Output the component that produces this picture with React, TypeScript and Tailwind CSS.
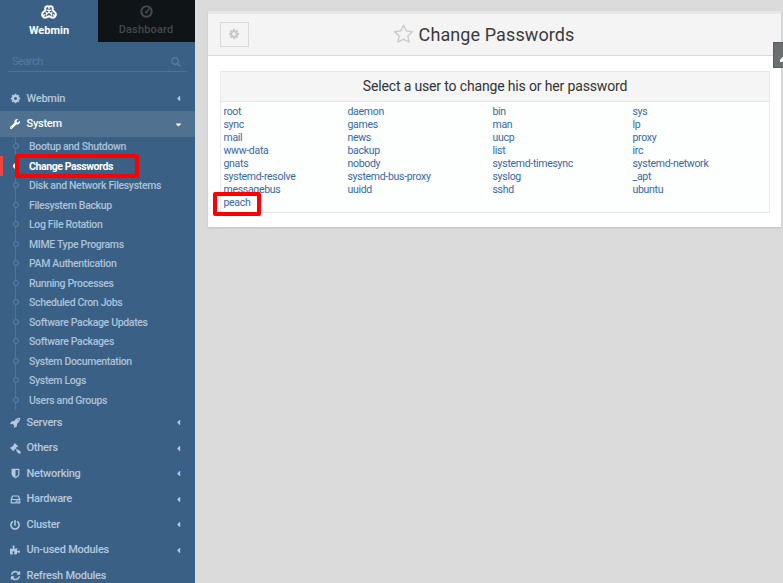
import type { ReactNode } from "react";
import { FaWrench, FaPowerOff, FaPuzzlePiece, FaSearch, FaCaretLeft, FaCaretDown } from "react-icons/fa";

const systemItems = [
  "Bootup and Shutdown", "Change Passwords", "Disk and Network Filesystems",
  "Filesystem Backup", "Log File Rotation", "MIME Type Programs",
  "PAM Authentication", "Running Processes", "Scheduled Cron Jobs",
  "Software Package Updates", "Software Packages", "System Documentation",
  "System Logs", "Users and Groups",
];

const users = [
  ["root", "daemon", "bin", "sys"],
  ["sync", "games", "man", "lp"],
  ["mail", "news", "uucp", "proxy"],
  ["www-data", "backup", "list", "irc"],
  ["gnats", "nobody", "systemd-timesync", "systemd-network"],
  ["systemd-resolve", "systemd-bus-proxy", "syslog", "_apt"],
  ["messagebus", "uuidd", "sshd", "ubuntu"],
  ["peach"],
];

const glyphs = {
  cog: "M1152 896q0-106-75-181t-181-75-181 75-75 181 75 181 181 75 181-75 75-181zm512-109v222q0 12-8 23t-20 13l-185 28q-19 54-39 91 35 50 107 138 10 12 10 25t-9 23q-27 37-99 108t-94 71q-12 0-26-9l-138-108q-44 23-91 38-16 136-29 186-7 28-36 28h-222q-14 0-24.5-8.5t-11.5-21.5l-28-184q-49-16-90-37l-141 107q-10 9-25 9-14 0-25-11-126-114-165-168-7-10-7-23 0-12 8-23 15-21 51-66.5t54-70.5q-27-50-41-99l-183-27q-13-2-21-12.5t-8-23.5v-222q0-12 8-23t19-13l186-28q14-46 39-92-40-57-107-138-10-12-10-24 0-10 9-23 26-36 98.5-107.5t94.5-71.5q13 0 26 10l138 107q44-23 91-38 16-136 29-186 7-28 36-28h222q14 0 24.5 8.5t11.5 21.5l28 184q49 16 90 37l142-107q9-9 24-9 13 0 25 10 129 119 165 170 7 8 7 22 0 12-8 23-15 21-51 66.5t-54 70.5q26 50 41 98l183 28q13 2 21 12.5t8 23.5z",
  rocket: "M1440 448q0-40-28-68t-68-28-68 28-28 68 28 68 68 28 68-28 28-68zm224-288q0 249-75.5 430.5t-253.5 360.5q-81 80-195 176l-20 379q-2 16-16 26l-384 224q-7 4-16 4-12 0-23-9l-64-64q-13-14-8-32l85-276-281-281-276 85q-3 1-9 1-14 0-23-9l-64-64q-17-19-5-39l224-384q10-14 26-16l379-20q96-114 176-195 188-187 358-258t431-71q14 0 24 9.5t10 22.5z",
  shield: "M1344 960v-640h-448v1137q119-63 213-137 235-184 235-360zm192-768v768q0 86-33.5 170.5t-83 150-118 127.5-126.5 103-121 77.5-89.5 49.5-42.5 20q-12 6-26 6t-26-6q-16-7-42.5-20t-89.5-49.5-121-77.5-126.5-103-118-127.5-83-150-33.5-170.5v-768q0-26 19-45t45-19h1152q26 0 45 19t19 45z",
  star: "M1201 1004l306-297-422-62-189-382-189 382-422 62 306 297-73 421 378-199 377 199zm527-357q0 22-26 48l-363 354 86 500q1 7 1 20 0 50-41 50-19 0-40-12l-449-236-449 236q-22 12-40 12-21 0-31.5-14.5t-10.5-35.5q0-6 2-20l86-500-364-354q-25-27-25-48 0-37 56-46l502-73 225-455q19-41 49-41t49 41l225 455 502 73q56 9 56 46z",
  gavel: "M1771 1536q0 53-37 90l-107 108q-39 37-91 37-53 0-90-37l-363-364q-38-36-38-90 0-53 43-96l-256-256-126 126q-14 14-34 14t-34-14q2 2 12.5 12t12.5 13 10 11.5 10 13.5 6 13.5 5.5 16.5 1.5 18q0 38-28 68-3 3-16.5 18t-19 20.5-18.5 16.5-22 15.5-22 9-26 4.5q-40 0-68-28l-408-408q-28-28-28-68 0-13 4.5-26t9-22 15.5-22 16.5-18.5 20.5-19 18-16.5q30-28 68-28 10 0 18 1.5t16.5 5.5 13.5 6 13.5 10 11.5 10 13 12.5 12 12.5q-14-14-14-34t14-34l348-348q14-14 34-14t34 14q-2-2-12.5-12t-12.5-13-10-11.5-10-13.5-6-13.5-5.5-16.5-1.5-18q0-38 28-68 3-3 16.5-18t19-20.5 18.5-16.5 22-15.5 22-9 26-4.5q40 0 68 28l408 408q28 28 28 68 0 13-4.5 26t-9 22-15.5 22-16.5 18.5-20.5 19-18 16.5q-30 28-68 28-10 0-18-1.5t-16.5-5.5-13.5-6-13.5-10-11.5-10-13-12.5-12-12.5q14 14 14 34t-14 34l-126 126 256 256q43-43 96-43 52 0 91 37l363 363q37 39 37 91z",
  refresh: "M1639 1056q0 5-1 7-64 268-268 434.5t-478 166.5q-146 0-282.5-55t-243.5-157l-129 129q-19 19-45 19t-45-19-19-45v-448q0-26 19-45t45-19h448q26 0 45 19t19 45-19 45l-137 137q71 66 161 102t187 36q134 0 250-65t186-179q11-17 53-117 8-23 30-23h192q13 0 22.5 9.5t9.5 22.5zm25-800v448q0 26-19 45t-45 19h-448q-26 0-45-19t-19-45 19-45l138-138q-148-137-349-137-134 0-250 65t-186 179q-11 17-53 117-8 23-30 23h-199q-13 0-22.5-9.5t-9.5-22.5v-7q65-268 270-434.5t480-166.5q146 0 284 55.5t245 156.5l130-129q19-19 45-19t45 19 19 45z",
};

function Glyph({ name, size = 11 }: { name: keyof typeof glyphs; size?: number }) {
  return (
    <svg className="shrink-0" width={size} height={size} viewBox="0 0 1792 1792" fill="currentColor">
      <path d={glyphs[name]} />
    </svg>
  );
}

function DriveIcon() {
  return (
    <svg width="11" height="9" viewBox="0 0 11 9" fill="none" stroke="currentColor" strokeWidth="1.2" strokeLinejoin="round">
      <path d="M1.2 4.500H9.800V7.900H1.200ZM1.200 4.500 2.600 1H8.400L9.800 4.500M5.500 6.200H8.500" />
    </svg>
  );
}

function WebminLogo() {
  return (
    <svg width="16" height="14" viewBox="0 0 16 14" fill="none" stroke="currentColor" strokeLinejoin="round" strokeLinecap="round">
      <path strokeWidth="2" d="M8 1.600C6.300.600 4.200 1.400 4.200 3.300L4.400 5.200 2.600 6.700C1 7.900 1 9.700 1.600 11 2.600 12.800 4.400 12.900 5.800 12.200L8 11.300 10.200 12.200C11.600 12.900 13.400 12.800 14.400 11 15 9.700 15 7.900 13.400 6.700L11.600 5.200 11.800 3.300C11.800 1.400 9.700.600 8 1.600Z" />
      <path strokeWidth="1.300" d="M8 2V4M6.500 5.200Q8 6.200 9.500 5.200M8 5.700V7.300L5.800 8.700M8 7.300 10.200 8.700M5 7.400Q6.200 8.600 5.500 10M11 7.400Q9.800 8.600 10.500 10M3.800 9.800 2.600 10.400M12.200 9.800 13.400 10.400" />
    </svg>
  );
}

function DashboardIcon() {
  return (
    <svg width="13" height="13" viewBox="0 0 13 13" fill="none" stroke="currentColor" strokeWidth="2">
      <circle cx="6.500" cy="6.500" r="5.200" />
      <path d="M6.200 7.200 9.500 3.600" strokeWidth="1.600" />
      <circle cx="6.200" cy="7.200" r="1.300" fill="currentColor" stroke="none" />
    </svg>
  );
}

function MenuRow({ icon, label, active, arrow = true }: { icon: ReactNode; label: string; active?: boolean; arrow?: boolean }) {
  return (
    <div className={`flex h-[25.5px] shrink-0 items-center pl-[10px] pr-[13px] pt-px text-[11px] font-medium tracking-[-0.25px] ${active ? "bg-[#507290] text-white" : "text-[#b5c8df]"}`}>
      <span className="flex w-[16.5px] items-center text-[10px]">{icon}</span>
      <span className="flex-1 whitespace-nowrap">{label}</span>
      {arrow && <span className="flex w-[7px] justify-center pr-px text-[9px]">{active ? <FaCaretDown className="shrink-0" /> : <FaCaretLeft className="shrink-0" />}</span>}
    </div>
  );
}

export default function App() {
  return (
    <div className="relative flex h-[583px] w-[783px] overflow-hidden bg-[#dbdbdb] font-['Roboto',sans-serif]">
      <aside className="flex w-[195px] shrink-0 flex-col overflow-hidden bg-[#3a6185]">
        <div className="flex h-[42px] shrink-0 text-[11px]">
          <div className="flex w-[98px] flex-col items-center pt-[5px] font-bold text-white">
            <WebminLogo />
            <span className="mt-[4px] leading-[15px]">Webmin</span>
          </div>
          <div className="flex flex-1 flex-col items-center bg-[#0f1416] pr-px pt-[5px] font-medium text-[#43494f]">
            <DashboardIcon />
            <span className="mt-[4px] leading-[15px] tracking-[0.15px]">Dashboard</span>
          </div>
        </div>
        <div className="mx-2 mt-[9px] flex h-[21px] shrink-0 items-center justify-between border-b border-[#4c7398] pl-1 pr-[6px] pt-[2px] text-[11px] text-[#5579a0]">
          <span className="tracking-[-0.5px]">Search</span>
          <FaSearch className="text-[10px]" />
        </div>
        <div className="h-[13.5px] shrink-0" />
        <MenuRow icon={<Glyph name="cog" />} label="Webmin" />
        <MenuRow icon={<FaWrench />} label="System" active />
        <div className="relative shrink-0 before:absolute before:bottom-0 before:left-[15px] before:top-0 before:w-px before:bg-[#507595]">
          {systemItems.map((item, i) => {
            const current = i === 1;
            return (
              <div key={item} className={`relative flex h-[19.5px] items-center text-[10.5px] ${current ? "font-bold tracking-[-0.4px] text-white" : "font-medium tracking-[-0.34px] text-[#adc2da]"}`}>
                <span className={`h-[20px] w-[3px] ${current ? "bg-[#f04440]" : ""}`} />
                <span className={`ml-[10px] size-[6px] rounded-full border ${current ? "border-white bg-white" : "border-[#5883a6] bg-[#3a6185]"}`} />
                <span className="ml-[10px] whitespace-nowrap pt-[2px]">{item}</span>
              </div>
            );
          })}
        </div>
        <MenuRow icon={<Glyph name="rocket" />} label="Servers" />
        <MenuRow icon={<Glyph name="gavel" />} label="Others" />
        <MenuRow icon={<Glyph name="shield" />} label="Networking" />
        <MenuRow icon={<DriveIcon />} label="Hardware" />
        <MenuRow icon={<FaPowerOff />} label="Cluster" />
        <MenuRow icon={<FaPuzzlePiece />} label="Un-used Modules" />
        <MenuRow icon={<Glyph name="refresh" />} label="Refresh Modules" arrow={false} />
      </aside>

      <main className="flex-1 pl-[13px] pr-[2px] pt-[11px]">
        <section className="h-[216px] border-t-[3px] border-[#e7e7e7] bg-white shadow-[0_1px_2px_rgba(0,0,0,0.12)]">
          <header className="relative flex h-[42px] items-center justify-center border-b border-[#d8d8d8] bg-[#f4f4f4]">
            <button className="absolute left-3 top-2 flex h-[25px] w-[29px] items-center justify-center border border-[#dadada] pb-px pr-px text-[#cacaca]">
              <Glyph name="cog" size={12} />
            </button>
            <span className="mr-[5px] text-[#cdcdcd]"><Glyph name="star" size={21} /></span>
            <h1 className="mr-[22px] whitespace-nowrap text-[18px] tracking-[0.1px] text-[#3a3a3a]">Change Passwords</h1>
          </header>
          <div className="ml-3 mt-[15px] h-[142px] w-[550px] border border-[#e7e9e9] bg-[#fdfefe]">
            <div className="flex h-[30px] items-center justify-center border-b border-[#e7e9e9] bg-[#f5f5f5] text-[14px] tracking-[-0.15px] text-[#333]">
              Select a user to change his or her password
            </div>
            <div className="grid grid-cols-[124px_145px_140px_1fr] pl-[2.5px] pt-[3px] text-[10.5px] leading-[13px] tracking-[-0.3px] text-[#3568a6]">
              {users.flat().map((user) => <a key={user} className="whitespace-nowrap">{user}</a>)}
            </div>
          </div>
        </section>
      </main>

      <div className="absolute left-[773px] top-[42px] h-[26px] w-[10px] overflow-hidden border border-r-0 border-[#5a5d5d] bg-[#6b6f6f] text-white">
        <svg className="absolute left-[6px] top-[10px]" width="12" height="9" viewBox="0 0 12 9"><path d="M0 7 6 0 12 7V9H0Z" fill="currentColor" /></svg>
      </div>
      <div className="absolute left-[15px] top-[154px] h-[24px] w-[124px] rounded-[2px] border-4 border-[#fe0000]" />
      <div className="absolute left-[213px] top-[192px] h-[24px] w-[48px] rounded-[2px] border-4 border-[#fe0000]" />
    </div>
  );
}
